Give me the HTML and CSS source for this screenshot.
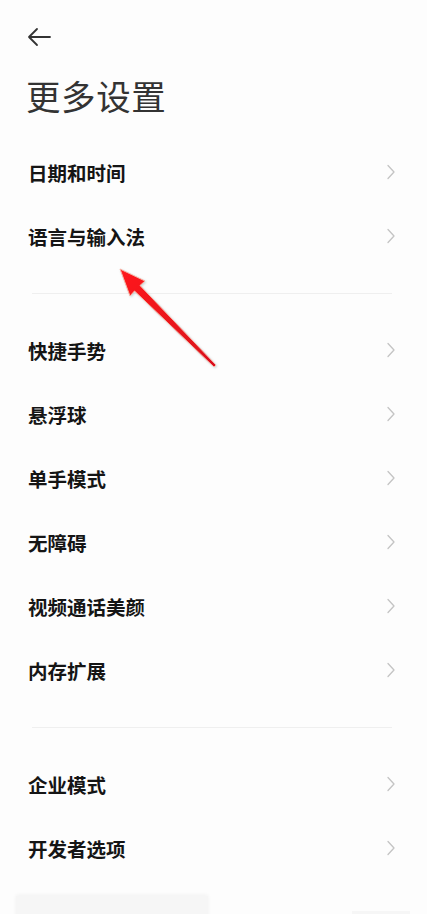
FILE: index.html
```html
<!doctype html>
<html lang="zh-CN">

<head>
  <meta charset="UTF-8" />
  <meta name="viewport" content="width=device-width, initial-scale=1.0" />
  <title>更多设置</title>
  <link rel="stylesheet" href="styles.css">
</head>

<body>
  <div class="page">
    <header class="header">
      <button class="back" aria-label="返回">
        <svg width="26" height="24" viewBox="0 0 26 24">
          <path d="M24 12H3 M11 4L3 12L11 20" fill="none" stroke="#333" stroke-width="1.8" stroke-linecap="round" stroke-linejoin="round" />
        </svg>
      </button>
      <h1 class="title">更多设置</h1>
    </header>

    <section class="group">
      <div class="row"><span>日期和时间</span><svg class="chev" viewBox="0 0 10 16"><path d="M2 1.5L8 8L2 14.5" /></svg></div>
      <div class="row"><span>语言与输入法</span><svg class="chev" viewBox="0 0 10 16"><path d="M2 1.5L8 8L2 14.5" /></svg></div>
    </section>

    <hr class="divider">

    <section class="group">
      <div class="row"><span>快捷手势</span><svg class="chev" viewBox="0 0 10 16"><path d="M2 1.5L8 8L2 14.5" /></svg></div>
      <div class="row"><span>悬浮球</span><svg class="chev" viewBox="0 0 10 16"><path d="M2 1.5L8 8L2 14.5" /></svg></div>
      <div class="row"><span>单手模式</span><svg class="chev" viewBox="0 0 10 16"><path d="M2 1.5L8 8L2 14.5" /></svg></div>
      <div class="row"><span>无障碍</span><svg class="chev" viewBox="0 0 10 16"><path d="M2 1.5L8 8L2 14.5" /></svg></div>
      <div class="row"><span>视频通话美颜</span><svg class="chev" viewBox="0 0 10 16"><path d="M2 1.5L8 8L2 14.5" /></svg></div>
      <div class="row"><span>内存扩展</span><svg class="chev" viewBox="0 0 10 16"><path d="M2 1.5L8 8L2 14.5" /></svg></div>
    </section>

    <hr class="divider">

    <section class="group">
      <div class="row"><span>企业模式</span><svg class="chev" viewBox="0 0 10 16"><path d="M2 1.5L8 8L2 14.5" /></svg></div>
      <div class="row"><span>开发者选项</span><svg class="chev" viewBox="0 0 10 16"><path d="M2 1.5L8 8L2 14.5" /></svg></div>
    </section>

    <div class="dock">
      <div class="dock-left"></div>
      <div class="dock-right"></div>
    </div>

    <!-- annotation arrow -->
    <svg class="pointer" width="427" height="914" viewBox="0 0 427 914">
      <defs>
        <linearGradient id="red" x1="0" y1="0" x2="1" y2="1">
          <stop offset="0" stop-color="#ff1a1a" />
          <stop offset="1" stop-color="#d8101a" />
        </linearGradient>
        <filter id="soft" x="-20%" y="-20%" width="140%" height="140%">
          <feDropShadow dx="1" dy="1" stdDeviation="1" flood-color="#6b8f8f" flood-opacity="0.35" />
        </filter>
      </defs>
      <polygon points="120,269 145,281 140,285.5 216,365 214,367 134.5,291 130,296" fill="url(#red)" stroke="#f6b2a4" stroke-width="1" stroke-linejoin="round" filter="url(#soft)" />
    </svg>
  </div>
</body>

</html>
```

FILE: styles.css
```css
* {
  margin: 0;
  padding: 0;
  box-sizing: border-box;
}

body {
  background: #fdfdfd;
  font-family: "Noto Sans CJK SC", "Noto Sans", sans-serif;
  color: #1a1a1a;
  overflow: hidden;
  height: 914px;
}

.page {
  position: relative;
  width: 427px;
  height: 914px;
  overflow: hidden;
}

.header {
  padding: 25px 0 25px 26px;
}

.back {
  display: block;
  width: 26px;
  height: 24px;
  border: 0;
  background: none;
}

.title {
  margin-top: 26px;
  font-size: 34.5px;
  line-height: 40px;
  font-weight: 400;
  color: #333;
  letter-spacing: 0.6px;
}

.row {
  height: 64px;
  display: flex;
  align-items: center;
  justify-content: space-between;
  padding: 0 31px 0 28px;
  font-size: 19.5px;
  font-weight: 700;
  color: #151515;
}

/* Chevron */
.chev {
  width: 10px;
  height: 16px;
  fill: none;
  stroke: #c4c4c4;
  stroke-width: 1.3;
  stroke-linecap: round;
  stroke-linejoin: round;
}

.divider {
  border: 0;
  height: 1px;
  background: #efefef;
  margin: 25px 35px 24px 32px;
}

.dock {
  display: flex;
  justify-content: space-between;
  align-items: flex-start;
  margin-top: 16px;
  padding: 0 17px 0 16px;
}

.dock-left {
  width: 192px;
  height: 30px;
  background: #f6f6f6;
  box-shadow: 0 -1px 4px rgba(0, 0, 0, 0.05);
}

.dock-right {
  width: 58px;
  height: 20px;
  margin-top: 15px;
  background: #f6f6f6;
}

.pointer {
  position: absolute;
  top: 0;
  left: 0;
  pointer-events: none;
}
```
